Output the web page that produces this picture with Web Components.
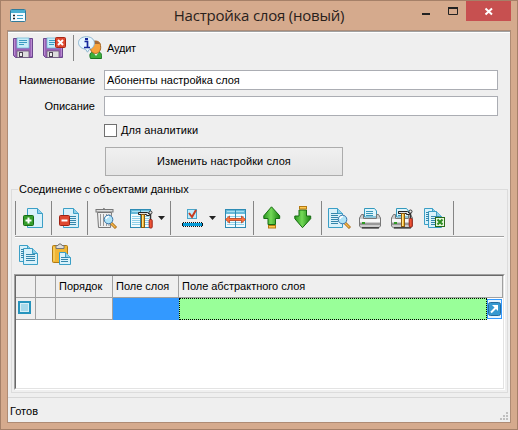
<!DOCTYPE html>
<html lang="ru"><head><meta charset="utf-8"><title>Настройка слоя (новый)</title>
<style>
html,body{margin:0;height:100%;overflow:hidden}
body{font:11px/13px "Liberation Sans",Arial,sans-serif;color:#000}
</style></head><body>
<app-window caption="Настройка слоя (новый)">
  <tool-bar style="height:34px;padding:3px 0 0 4px">
    <tool-icon name="save"></tool-icon>
    <tool-icon name="saveclose" style="margin-left:6px"></tool-icon>
    <tool-sep style="height:26px;margin:0 4px 0 7px"></tool-sep>
    <tool-icon name="audit"></tool-icon>
    <text-label style="margin:7px 0 0 5px;--ls:-.2px">Аудит</text-label>
  </tool-bar>
  <form-row label="Наименование" style="--ls:-.03px" value="Абоненты настройка слоя"></form-row>
  <form-row label="Описание" style="--ls:0px;margin-top:6px"></form-row>
  <check-box style="margin:8px 0 0 96px">Для аналитики</check-box>
  <push-button style="margin:10px 0 0 97px">Изменить настройки слоя</push-button>
  <group-box caption="Соединение с объектами данных">
    <tool-bar style="height:36px;border-bottom:1px solid #a0a0a0;box-shadow:0 1px #fff">
      <tool-sep></tool-sep>
      <tool-icon name="add" style="margin-left:5px"></tool-icon>
      <tool-sep style="margin-left:6px"></tool-sep>
      <tool-icon name="remove" style="margin-left:5px"></tool-icon>
      <tool-sep style="margin-left:6px"></tool-sep>
      <tool-icon name="trash" style="margin-left:6px"></tool-icon>
      <tool-icon name="tabletools" style="margin-left:12px"></tool-icon>
      <drop-arrow style="margin-left:3px"></drop-arrow>
      <tool-sep style="margin-left:4px"></tool-sep>
      <tool-icon name="checkline" style="margin-left:10px"></tool-icon>
      <drop-arrow style="margin-left:3px"></drop-arrow>
      <tool-icon name="fit" style="margin-left:7px"></tool-icon>
      <tool-sep style="margin-left:5px"></tool-sep>
      <tool-icon name="up" style="margin-left:6px"></tool-icon>
      <tool-icon name="down" style="margin-left:8px"></tool-icon>
      <tool-sep style="margin-left:5px"></tool-sep>
      <tool-icon name="preview" style="margin-left:5px"></tool-icon>
      <tool-icon name="printer" style="margin-left:7px"></tool-icon>
      <tool-icon name="printertools" style="margin-left:8px"></tool-icon>
      <tool-icon name="excel" style="margin-left:9px"></tool-icon>
      <tool-sep style="margin-left:6px"></tool-sep>
    </tool-bar>
    <tool-bar style="height:37px;padding:1px 0 0 3px">
      <tool-icon name="copy"></tool-icon>
      <tool-icon name="paste" style="margin-left:8px"></tool-icon>
    </tool-bar>
    <data-grid></data-grid>
  </group-box>
  <status-bar>Готов</status-bar>
</app-window>
<script>
const define = (name, build) => customElements.define(name, class extends HTMLElement {
  connectedCallback() {
    if (this.shadowRoot) return;
    this.attachShadow({mode: 'open'}).innerHTML =
      '<style>*{box-sizing:border-box}:host{box-sizing:border-box}</style>' + build(this);
  }
});

const doc = (x, y, w = 14, h = 18) =>
  `<path d="M${x+.5} ${y+.5}h${w-6}l5 5v${h-6}h-${w-1}z" fill="#d9f1fa" stroke="#3b9fc6"/>
   <path d="M${x+w-5.5} ${y+.5}v5h5" fill="#8fcfe8" stroke="#3b9fc6"/>`;
const lines = (x, y, w, n, c = '#3486ab', s = 2) =>
  Array.from({length: n}, (_, i) => `<rect x="${x}" y="${y+i*s}" width="${w}" height="1" fill="${c}"/>`).join('');
const disk = `<path d="M2.500 2.500h19v19h-17l-2-2z" fill="#9a63b8" stroke="#6a478d"/>
  <path d="M3.500 3v16M20.500 3v17" stroke="#b98bd0"/>
  <rect x="6" y="2" width="12" height="10" fill="#c8edf8" stroke="#64b5d4" stroke-width=".7"/>
  ${lines(8,4,8,2,'#3a9bc1',2)}${lines(8,8,5,1,'#3a9bc1')}
  <rect x="6" y="15" width="12" height="6.500" fill="#ddd" stroke="#685478" stroke-width=".8"/><rect x="8" y="16" width="4" height="5" fill="#4c4454"/><rect x="9" y="17" width="2" height="3" fill="#eee"/>`;
const tools = `<path d="M9.500 6.500h9l2 2v1h-3v-1h-8z" fill="#ddd" stroke="#222"/>
  <rect x="12.500" y="8.500" width="3" height="13" fill="#f5bd36" stroke="#8a5a10"/><rect x="13" y="9" width="1" height="12" fill="#ffe28c"/>
  <path d="M21.500 8v6" stroke="#333" stroke-width="1.500"/><circle cx="21.500" cy="6.500" r="1.500" fill="#eee" stroke="#333"/>
  <rect x="20.200" y="13.500" width="3" height="8.500" rx="1" fill="#ee5335" stroke="#9c2419"/>`;
const table = (x, w) => `<rect x="${x+.5}" y="3.500" width="${w-1}" height="18" fill="#f1fbfe" stroke="#2d8bb4"/>
  <rect x="${x+1}" y="4" width="${w-2}" height="4" fill="#66bada"/>${lines(x+2,5,w-4,1,'#a7def0')}${lines(x+2,10,w-4,5,'#8fd0e8',2)}
  <path d="M${x+w/2} 3v19" stroke="#2d8bb4"/>`;
const lens = `<path d="M18 17l5 5" stroke="#a56612" stroke-width="3"/><path d="M18 17l4.500 4.500" stroke="#f4b84b" stroke-width="1.500"/>
  <circle cx="15.500" cy="13.500" r="4.300" fill="#aee3f7" stroke="#3973a8"/><path d="M13 13a3 3 0 0 1 3-2.500" stroke="#fff" stroke-width="1.500" fill="none"/>`;
const printer = `<path d="M6.500 11v-8.500h10l2 2.500v6z" fill="#def5fb" stroke="#3499bd"/>${lines(8,5,7,3,'#3795b7')}
  <path d="M3.500 8.500h2v4h13v-4h2l2 3.500v8l-2 2h-17l-2-2v-8z" fill="#cdcdcd" stroke="#777"/>
  <rect x="2" y="13" width="20" height="3" fill="#f7f7f7"/><rect x="2" y="17" width="20" height="2" fill="#999"/><rect x="4" y="21" width="17" height="1.500" fill="#444"/><rect x="4" y="16" width="3" height="2" fill="#2e9b22"/>`;
const badge = (x, y, s, a, b, g) => `<rect x="${x+.5}" y="${y+.5}" width="${s-1}" height="${s-1}" rx="1" fill="${a}" stroke="${b}"/><path d="${g}" stroke="#fff" stroke-width="2" fill="none"/>`;
const arrow = '<path d="M10.500 .8l8.200 9v2.700h-4.200v6h-7.500v-6h-4.200v-2.700z" fill="url(#g)" stroke="#176d12"/><rect x="7.500" y="19.500" width="7" height="2.500" fill="#ffcb50" stroke="#b47912"/>';
const green = '<defs><linearGradient id="g"><stop stop-color="#2a9720"/><stop offset=".45" stop-color="#73d957"/><stop offset="1" stop-color="#19820f"/></linearGradient></defs>';

const icons = {
  save: `<g transform="translate(-1)">${disk}</g>`,
  saveclose: `<g transform="translate(-1)">${disk}</g>${badge(13,1,11,'#df4930','#a92614','M16 4l5 5M21 4l-5 5')}`,
  audit: `<path d="M12.500 22.500c-2-5 1-7 4-7h3c3 0 5 3 4 7z" fill="#3cae3b" stroke="#197421"/><path d="M15 16l3 4 3-4z" fill="#ecf7ed"/>
    <path d="M12.500 9.500c0-6 10-6 10 0 1 5-2 8-5 8s-6-3-5-8z" fill="#f6a33c" stroke="#a66521"/><path d="M13 8c2-4 7-4 9 0z" fill="#a86b35"/>
    <path d="M8.500 .700c10 0 10 11 3 12.500l-2 3-2-3C-2 12-2 .700 8.500 .700z" fill="#e7f6ff" stroke="#8cb5ce"/>
    <path d="M6.500 5.500h3v6M6 11.500h6" stroke="#14279b" stroke-width="1.700" fill="none"/><rect x="7" y="2" width="3" height="2.200" fill="#14279b"/>`,
  add: doc(6,2,16,20)+badge(2,9,11,'#359d2b','#176b14','M4.500 14.500h6M7.500 11.500v6'),
  remove: doc(6,2,16,20)+lines(11,10,8,5)+badge(2,9,11,'#df4930','#9f2213','M4.500 14.500h6'),
  trash: `<path d="M8.500 3.500q1-2 3 0" stroke="#666" fill="none"/><rect x="2" y="3.500" width="17" height="2.500" fill="#ddd" stroke="#777"/><path d="M3.500 6.500h14l-1 15h-12z" fill="#eee" stroke="#777"/>
    <path d="M6.500 8v12M9.500 8v12M12.500 8v12M15 8v12" stroke="#999"/><g transform="translate(-1)">${lens}</g>`,
  tabletools: table(0,21)+`<g transform="translate(-1)">${tools}</g>`,
  checkline: `<rect x="6.500" y="3.500" width="9" height="9" fill="#bfeafb" stroke="#49a5ca"/><path d="M8 7l3 4 4-7" stroke="#c83c20" stroke-width="2" fill="none"/>
    <rect x="1" y="16" width="21" height="5" fill="#111"/><rect x="2" y="17" width="19" height="3" fill="#079ad6"/><path d="M1 16.500h21M1 20.500h21" stroke="#efefef" stroke-dasharray="1 1"/>`,
  fit: table(1,21)+`<path d="M1.500 13.500l4-3.500v2.500h12v-2.500l4 3.500-4 3.500v-2.500h-12v2.500z" fill="#ff713b" stroke="#b73814" stroke-width=".7"/>`,
  up: green+`<g transform="translate(1)">${arrow}</g>`,
  down: green+`<g transform="matrix(1 0 0 -1 0 22.500)">${arrow}</g>`,
  preview: doc(1,2,15,20)+lines(4,7,7,6)+lens,
  printer, printertools: printer+`<g transform="translate(-1 -1)">${tools}</g>`,
  excel: doc(1,2,14,17)+doc(5,5,14,17)+lines(3,6,3,5)+lines(8,10,8,5)+`<rect x="12.500" y="11.500" width="9" height="9" fill="#e6f5db" stroke="#286b19"/><path d="M14.500 13.500l5 5M19.500 13.500l-5 5" stroke="#2c8c20" stroke-width="2"/>`,
  copy: doc(1,2,14,17)+doc(5,5,15,17)+lines(3,6,3,5)+lines(8,11,9,4),
  paste: `<rect x="2.500" y="2.500" width="15" height="17" rx="1" fill="#f0b635" stroke="#b17b14"/><path d="M4 4v14" stroke="#ffdf7a"/>
    <path d="M6 5.500v-3h2l1-1.500h2l1 1.500h2v3z" fill="#ddd" stroke="#777"/>`+doc(9,9,12,13)+lines(11,14,7,3)
};

define('tool-icon', e => `<style>:host{display:block;width:24px;height:24px;flex:none;margin-top:5px}:host([name=save]),:host([name=saveclose]),:host([name=audit]){margin-top:1px}svg{display:block}</style>
  <svg width="24" height="24" viewBox="0 0 24 24">${icons[e.getAttribute('name')]}</svg>`);
define('tool-sep', () => '<style>:host{display:block;flex:none;width:1px;height:34px;background:#858585}</style>');
define('drop-arrow', () => '<style>:host{display:block;flex:none;padding:15px 1px 0}svg{display:block}</style><svg width="7" height="4"><path d="M0 0h7L3.500 4z" fill="#222"/></svg>');
define('tool-bar', () => '<style>:host{display:flex;align-items:flex-start}</style><slot></slot>');
define('text-label', () => '<style>:host{display:block;white-space:nowrap;letter-spacing:var(--ls,0)}</style><slot></slot>');

define('app-window', e => `<style>
  :host{display:flex;flex-direction:column;width:518px;height:430px;background:#d5aa8d;border:1px solid #a58068;padding:0 6px 6px}
  header{height:29px;display:flex;flex:none;position:relative}
  h1{margin:0;flex:1;text-align:center;font:15px/29px "Open Sans","Noto Sans",sans-serif;color:#29211c;letter-spacing:-.22px}
  .app{position:absolute;left:3px;top:8px}.ctl{position:absolute;top:0;right:0}
  main{flex:1;display:flex;flex-direction:column;min-height:0;background:#efefef;border:1px solid #ae8b74;border-top:1px solid #ab8c78;box-shadow:inset 0 1px #a0a0a0,inset 0 2px #fff;padding-top:1px}
  </style><header><svg class="app" width="16" height="13"><rect x=".5" y=".5" width="15" height="12" rx="1" fill="#f3fbff" stroke="#307b9b"/><path d="M1 2.500h14" stroke="#49afd1" stroke-width="3"/><path d="M3 6.500h2M3 9.500h2" stroke="#222" stroke-width="1.500"/><path d="M7 6.500h6M7 9.500h6" stroke="#3a9dc4"/></svg>
  <h1>${e.getAttribute('caption')}</h1>
  <svg class="ctl" width="89" height="20"><rect y="12" width="8" height="2" fill="#222"/><path d="M26.500 6.500h9v7h-9z" fill="none" stroke="#222"/><path d="M26 7h10" stroke="#222" stroke-width="2"/><rect x="44" width="45" height="20" fill="#c75050"/><path d="M63.500 7.500l6.500 6M70 7.500l-6.500 6" stroke="#fff" stroke-width="2"/></svg></header>
  <main><slot></slot></main>`);

define('form-row', e => `<style>:host{display:grid;grid-template-columns:96px 394px;height:20px;margin-top:4px;line-height:18px;white-space:nowrap;letter-spacing:var(--ls)}
  label{text-align:right;padding-right:9px;padding-top:1px}div{background:#fff;border:1px solid #abadb3;padding-left:2px}</style>
  <label>${e.getAttribute('label')}</label><div>${e.getAttribute('value') || ''}</div>`);
define('check-box', () => '<style>:host{display:flex;gap:4px;height:13px;white-space:nowrap;letter-spacing:var(--ls,.1px)}i{width:13px;height:13px;background:#fff;border:1px solid #707070}</style><i></i><span><slot></slot></span>');
define('push-button', () => '<style>:host{display:block;width:238px;height:29px;border:1px solid #acacac;background:linear-gradient(#f0f0f0,#e5e5e5);text-align:center;line-height:27px;letter-spacing:var(--ls,.08px)}</style><slot></slot>');

define('group-box', e => `<style>:host{display:block;margin:7px 2px 4px 3px;height:210px;flex:none}
  fieldset{margin:0;border:1px solid #dcdcdc;padding:0 3px;height:210px;min-width:0}
  legend{margin-left:3px;padding:0 1px;height:13px;white-space:nowrap;letter-spacing:-.03px}.in{padding-top:5px}</style>
  <fieldset><legend>${e.getAttribute('caption')}</legend><div class="in"><slot></slot></div></fieldset>`);

define('data-grid', () => `<style>
  :host{display:block;margin-left:-1px;height:116px;width:491px;background:#fff;border:1px solid;border-color:#a0a0a0 #fff #fff #a0a0a0}
  .in{height:114px;border:1px solid;border-color:#696969 #e3e3e3 #e3e3e3 #696969}
  .row{display:grid;grid-template-columns:20px 20px 57px 66px 324px;height:22px;line-height:20px;white-space:nowrap;letter-spacing:-.02px}
  .c{background:#efefef;border-right:1px solid #a0a0a0;border-bottom:1px solid #a0a0a0;padding-left:3px}
  .blue{background:#3399ff}.last{display:flex;background:#fff}.green{flex:none;width:308px;height:22px;background:#99ff99;border:1px dotted #000}
  svg{display:block}</style><div class="in">
  <div class="row"><div class="c"></div><div class="c"></div><div class="c">Порядок</div><div class="c">Поле слоя</div><div class="c">Поле абстрактного слоя</div></div>
  <div class="row"><div class="c" style="padding:3px 0 0 2px"><svg width="13" height="13"><rect x="1" y="1" width="11" height="11" fill="#a6d8ea" stroke="#2694bd" stroke-width="2"/><rect x="2.500" y="2.500" width="8" height="8" fill="none" stroke="#d7eff6"/></svg></div><div class="c"></div><div class="c"></div><div class="blue"></div>
  <div class="last"><div class="green"></div><svg width="15" height="22"><rect x=".5" y="1.500" width="14" height="19" fill="#e8f5ff" stroke="#3399ff"/><rect x="1.500" y="4.500" width="12" height="13" rx="2" fill="#3698d0" stroke="#246b9d"/><path d="M4 14.500l6-6" stroke="#fff" stroke-width="2"/><path d="M5 7h6v6z" fill="#fff"/></svg></div></div></div>`);
define('status-bar', () => `<style>:host{display:flex;justify-content:space-between;flex:1;border-top:1px solid #d7d7d7;padding:7px 2px 0 2px}svg{margin-top:7px}</style><span><slot></slot></span>
  <svg width="8" height="8" fill="#bfbfbf"><path d="M6 0h2v2H6zM3 3h2v2H3zM6 3h2v2H6zM0 6h2v2H0zM3 6h2v2H3zM6 6h2v2H6z"/></svg>`);
</script></body></html>
